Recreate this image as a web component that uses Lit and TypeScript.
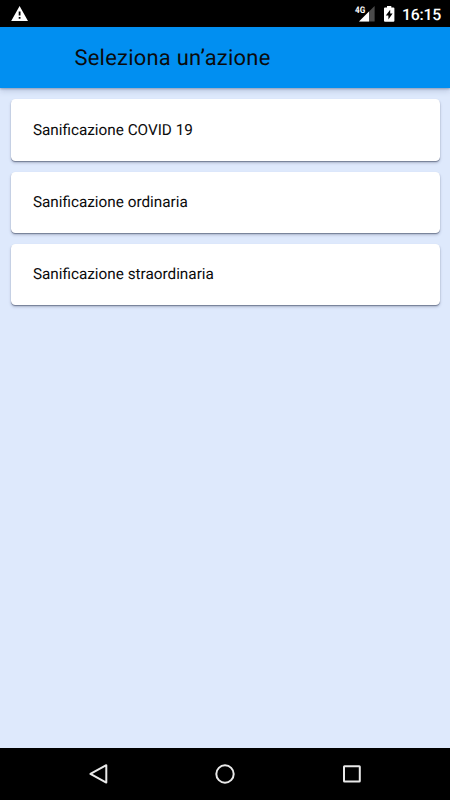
import { LitElement, html, css } from "lit";
import { customElement } from "lit/decorators.js";

@customElement("app-root")
export class AppRoot extends LitElement {
  static styles = css`
    :host {
      display: flex;
      flex-direction: column;
      width: 450px;
      height: 800px;
      overflow: hidden;
      background: #dee9fc;
      color: #0b0b0c;
      font-family: Roboto, "Liberation Sans", sans-serif;
      text-rendering: geometricPrecision;
    }
    svg { display: block; }
    .status {
      flex: none;
      display: flex;
      justify-content: space-between;
      height: 27px;
      background: #000;
    }
    .clock { font-size: 15.9px; font-weight: 500; fill: #fff; }
    .network { font-size: 9.2px; font-weight: 700; fill: #fff; }
    .bar {
      flex: none;
      display: flex;
      align-items: center;
      box-sizing: border-box;
      height: 61.4px;
      padding: 3px 0 0 74.4px;
      background: #018ff1;
      box-shadow: 0 1px 2px rgba(40, 60, 100, 0.35), 0 3px 6px rgba(60, 80, 120, 0.2);
    }
    .title {
      margin: 0;
      font-size: 21.9px;
      font-weight: 400;
      line-height: 26px;
      letter-spacing: 0.27px;
      white-space: nowrap;
    }
    .list {
      flex: 1;
      display: flex;
      flex-direction: column;
      gap: 10.8px;
      padding: 11px 10.5px 0 11px;
    }
    .card {
      display: flex;
      align-items: center;
      box-sizing: border-box;
      height: 61.4px;
      padding-left: 21.9px;
      border-radius: 4.4px;
      background: #fff;
      font-size: 15.3px;
      box-shadow: 0 1px 1px rgba(50, 60, 85, 0.5), 0 2px 3px rgba(60, 70, 100, 0.28);
    }
    .nav { flex: none; height: 52.5px; background: #000; }
  `;

  private actions = [
    "Sanificazione COVID 19",
    "Sanificazione ordinaria",
    "Sanificazione straordinaria",
  ];

  render() {
    return html`
      <div class="status">
        <svg width="60" height="27" viewBox="0 0 60 27">
          <path fill="#fff" fill-rule="evenodd"
            d="M19.6 6L28 21H11.2ZM18.7 11.5V15.6H20.5V11.5ZM18.7 17V18.8H20.5V17Z" />
        </svg>
        <svg width="105" height="27" viewBox="345 0 105 27">
          <path fill="#4b4b4b" d="M374.6 6V21.6H359Z" />
          <path fill="#fff" d="M369 11.6V21.6H359Z" />
          <path fill="#000" d="M354 4H366V14H354Z" />
          <text class="network" x="355" y="12.8" textLength="10.2" lengthAdjust="spacingAndGlyphs">4G</text>
          <path fill="#fff" fill-rule="evenodd"
            d="M387 6H391.3V7.6H393.4Q394.4 7.6 394.4 8.6V20.8Q394.4 21.8 393.4 21.8H385Q384 21.8 384 20.8V8.6Q384 7.6 385 7.6H387ZM390.2 9.8L385.8 15.5H388.4V19.4L392.6 13.6H390.2Z" />
          <text class="clock" x="402" y="19.8" textLength="39.4">16:15</text>
        </svg>
      </div>
      <header class="bar"><h1 class="title">Seleziona un’azione</h1></header>
      <main class="list">
        ${this.actions.map((a) => html`<div class="card">${a}</div>`)}
      </main>
      <nav class="nav">
        <svg width="450" height="52" viewBox="0 748 450 52" fill="none" stroke="#e9e9e9" stroke-width="2">
          <path stroke-linejoin="round" d="M106.3 765.2V782.6L90.4 773.9Z" />
          <circle cx="225" cy="774" r="8.7" />
          <rect x="344" y="766.2" width="15.8" height="15.4" rx=".5" />
        </svg>
      </nav>
    `;
  }
}
